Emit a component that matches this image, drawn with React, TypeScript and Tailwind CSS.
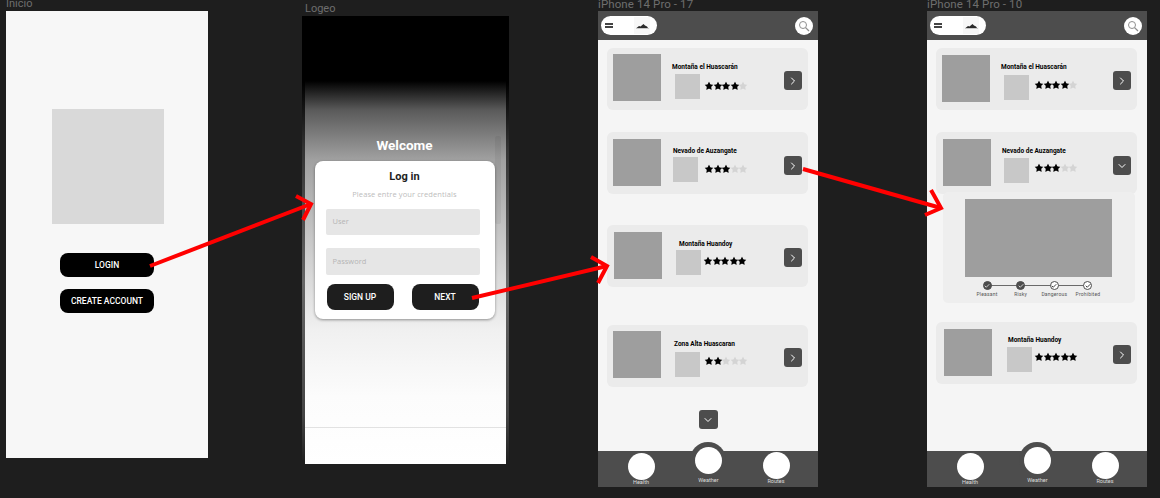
import { Check, ChevronDown, ChevronRight, Star } from "lucide-react";

const ROBOTO = "font-['Roboto','Liberation_Sans',sans-serif]";
const MONT = "font-['Open_Sans','Liberation_Sans',sans-serif]";

type Route = {
  title: string;
  stars: number;
  cardClass: string;
  imageClass: string;
  bodyClass: string;
  thumbClass: string;
  starsClass: string;
  buttonClass: string;
  open?: boolean;
};

const LIST_A: Route[] = [
  {
    title: "Montaña el Huascarán",
    stars: 4,
    cardClass: "mt-[8px]",
    imageClass: "ml-[6px] mt-[6px]",
    bodyClass: "ml-[11px] mt-[15px]",
    thumbClass: "ml-[3px] mt-[3px]",
    starsClass: "ml-[5px] mt-[10px]",
    buttonClass: "mt-[23px]",
  },
  {
    title: "Nevado de Auzangate",
    stars: 3,
    cardClass: "mt-[22px]",
    imageClass: "ml-[6px] mt-[7px]",
    bodyClass: "ml-[12px] mt-[15px]",
    thumbClass: "ml-[0px] mt-[2px]",
    starsClass: "ml-[7px] mt-[9px]",
    buttonClass: "mt-[24px]",
  },
  {
    title: "Montaña Huandoy",
    stars: 5,
    cardClass: "mt-[31px]",
    imageClass: "ml-[7px] mt-[7px]",
    bodyClass: "ml-[17px] mt-[15px]",
    thumbClass: "ml-[-3px] mt-[2px]",
    starsClass: "ml-[3px] mt-[8px]",
    buttonClass: "mt-[23px]",
  },
  {
    title: "Zona Alta Huascaran",
    stars: 2,
    cardClass: "mt-[38px]",
    imageClass: "ml-[6px] mt-[6px]",
    bodyClass: "ml-[13px] mt-[15px]",
    thumbClass: "ml-[1px] mt-[4px]",
    starsClass: "ml-[5px] mt-[8px]",
    buttonClass: "mt-[23px]",
  },
];

const LIST_B: Route[] = [
  {
    title: "Montaña el Huascarán",
    stars: 4,
    cardClass: "mt-[8px]",
    imageClass: "ml-[6px] mt-[7px]",
    bodyClass: "ml-[11px] mt-[15px]",
    thumbClass: "ml-[3px] mt-[4px]",
    starsClass: "ml-[6px] mt-[9px]",
    buttonClass: "mt-[23px]",
  },
  {
    title: "Nevado de Auzangate",
    stars: 3,
    cardClass: "mt-[22px]",
    imageClass: "ml-[7px] mt-[7px]",
    bodyClass: "ml-[11px] mt-[15px]",
    thumbClass: "ml-[2px] mt-[3px]",
    starsClass: "ml-[6px] mt-[8px]",
    buttonClass: "mt-[24px]",
    open: true,
  },
];

const LIST_B_LAST: Route = {
  title: "Montaña Huandoy",
  stars: 5,
  cardClass: "mt-[19px]",
  imageClass: "ml-[8px] mt-[7px]",
  bodyClass: "ml-[16px] mt-[14px]",
  thumbClass: "ml-[-1px] mt-[3px]",
  starsClass: "ml-[3px] mt-[8px]",
  buttonClass: "mt-[23px]",
};

const STEPS = [
  { label: "Pleasant", done: true },
  { label: "Risky", done: true },
  { label: "Dangerous", done: false },
  { label: "Prohibited", done: false },
];

function StarRow({ filled, className }: { filled: number; className: string }) {
  return (
    <div className={`flex pl-[1px] ${className}`}>
      {[0, 1, 2, 3, 4].map((i) => (
        <Star
          key={i}
          size={10}
          strokeWidth={0}
          className={`-ml-[1.6px] ${i < filled ? "fill-black" : "fill-[#d4d4d4]"}`}
        />
      ))}
    </div>
  );
}

function RouteCard({ route }: { route: Route }) {
  return (
    <div className={`ml-[9px] mr-[10px] flex h-[62px] items-start rounded-[6px] bg-[#ebebeb] ${route.cardClass}`}>
      <div className={`h-[47px] w-[48px] shrink-0 bg-[#9e9e9e] ${route.imageClass}`} />
      <div className={`w-[90px] shrink-0 ${route.bodyClass}`}>
        <p className={`${ROBOTO} whitespace-nowrap text-[6.5px] leading-[8px] font-bold text-black`}>{route.title}</p>
        <div className="flex items-start">
          <div className={`h-[25px] w-[25px] shrink-0 bg-[#c8c8c8] ${route.thumbClass}`} />
          <StarRow filled={route.stars} className={route.starsClass} />
        </div>
      </div>
      <div
        className={`ml-auto mr-[6px] flex h-[19px] w-[18px] shrink-0 items-center justify-center rounded-[3px] bg-[#4d4d4d] text-white ${route.buttonClass}`}
      >
        {route.open ? <ChevronDown size={12} strokeWidth={2} /> : <ChevronRight size={12} strokeWidth={2} />}
      </div>
    </div>
  );
}

function MountainLogo() {
  return (
    <svg viewBox="0 0 16 17" className="h-[17px] w-[16px] bg-[#f7f7f7]">
      <path d="M2.5 11 L5 9 L6.5 9.5 L9.5 7 L11 8.5 L13 9.5 L14 11 Z" fill="#2a2a2a" />
      <path d="M2 11.5 H15" stroke="#999" strokeWidth="0.5" />
    </svg>
  );
}

function Header() {
  return (
    <div className="flex h-[29px] shrink-0 items-center justify-between bg-[#4d4d4d] pl-[3px] pr-[5px]">
      <div className="flex h-[19px] w-[56px] items-center rounded-full bg-white pl-[4px]">
        <div className="flex w-[8px] flex-col gap-[1px]">
          <div className="h-[2px] bg-[#444]" />
          <div className="h-[2px] bg-[#444]" />
        </div>
        <div className="ml-[21px]">
          <MountainLogo />
        </div>
      </div>
      <div className="flex h-[18px] w-[18px] items-center justify-center rounded-full bg-white">
        <svg viewBox="0 0 12 12" className="h-[12px] w-[12px]" fill="none" stroke="#8f8f8f" strokeWidth="1">
          <circle cx="5" cy="5" r="3.5" />
          <path d="M7.6 7.6 L11 11" strokeWidth="1.3" />
        </svg>
      </div>
    </div>
  );
}

function BottomBar() {
  return (
    <div className="relative mt-auto flex h-[36px] shrink-0 items-start justify-between bg-[#4d4d4d] pl-[29px] pr-[28px]">
      <div className="absolute left-[92px] top-[-9px] h-[36px] w-[36px] rounded-full bg-[#4d4d4d]" />
      {[
        { label: "Health", tabClass: "mt-[2px]", gapClass: "mt-[-1px]" },
        { label: "Weather", tabClass: "mt-[-4px]", gapClass: "mt-[3px]" },
        { label: "Routes", tabClass: "mt-[1px]", gapClass: "mt-[-1px]" },
      ].map((tab) => (
        <div key={tab.label} className={`relative flex w-[28px] flex-col items-center ${tab.tabClass}`}>
          <div className="h-[27px] w-[27px] shrink-0 rounded-full bg-white" />
          <span className={`${ROBOTO} whitespace-nowrap text-[5.5px] leading-[7px] text-[#dddddd] ${tab.gapClass}`}>
            {tab.label}
          </span>
        </div>
      ))}
    </div>
  );
}

function Stepper() {
  return (
    <div className="relative ml-[31px] mt-[4px] flex w-[127px] justify-between">
      <div className="absolute left-[14px] right-[14px] top-[4px] h-[1px] bg-[#6a6a6a]" />
      {STEPS.map((step) => (
        <div key={step.label} className="relative flex w-[26px] flex-col items-center">
          <div
            className={`flex h-[9px] w-[9px] items-center justify-center rounded-full border border-[#4d4d4d] ${step.done ? "bg-[#4d4d4d] text-white" : "bg-white text-black"}`}
          >
            <Check size={6} strokeWidth={3} />
          </div>
          <span className={`${ROBOTO} mt-[1px] whitespace-nowrap text-[5px] leading-[6px] tracking-[0.2px] text-[#555]`}>
            {step.label}
          </span>
        </div>
      ))}
    </div>
  );
}

function RouteDetail() {
  return (
    <div className="ml-[16px] mr-[12px] mt-[-2px] h-[111px] rounded-[5px] bg-[#eeeeee] pt-[7px]">
      <div className="ml-[22px] h-[78px] w-[147px] bg-[#9e9e9e]" />
      <Stepper />
    </div>
  );
}

function Phone({ label, left, children }: { label: string; left: string; children: React.ReactNode }) {
  return (
    <section className={`absolute top-[-3px] flex w-[220px] flex-col ${left}`}>
      <p className={`${ROBOTO} h-[14px] whitespace-nowrap text-[11.5px] leading-[14px] tracking-[0.1px] text-[#6e6e6e]`}>{label}</p>
      <div className="flex h-[476px] flex-col bg-[#f5f5f5]">
        <Header />
        {children}
        <BottomBar />
      </div>
    </section>
  );
}

function Arrow({ points, head }: { points: string; head: string }) {
  return (
    <g fill="none" stroke="#ff0000" strokeWidth="4">
      <polyline points={points} />
      <polyline points={head} />
    </g>
  );
}

export default function App() {
  return (
    <div className="relative h-[498px] w-[1160px] overflow-hidden bg-[#1e1e1e]">
      {/* Inicio */}
      <section className="absolute left-[6px] top-[-3px] flex w-[202px] flex-col">
        <p className={`${ROBOTO} h-[14px] text-[11px] leading-[14px] text-[#6e6e6e]`}>Inicio</p>
        <div className="flex h-[447px] flex-col items-center bg-[#f7f7f7] pt-[98px]">
          <div className="ml-[2px] h-[115px] w-[112px] bg-[#d9d9d9]" />
          <button className={`${ROBOTO} mt-[29px] h-[24px] w-[94px] rounded-[8px] bg-black text-[8.5px] font-medium text-white`}>
            LOGIN
          </button>
          <button className={`${ROBOTO} mt-[12px] h-[24px] w-[94px] rounded-[8px] bg-black text-[8.5px] font-medium text-white`}>
            CREATE ACCOUNT
          </button>
        </div>
      </section>

      {/* Logeo */}
      <section className="absolute left-[302px] top-[2px] w-[207px]">
        <p className={`${ROBOTO} ml-[3px] h-[14px] text-[11px] leading-[14px] text-[#6e6e6e]`}>Logeo</p>
        <div className="h-[444px] w-[207px] bg-[linear-gradient(to_bottom,#000_15%,#333_30%,#666_60%,#444_90%,#222_100%)]">
          <div className="relative mx-[3px] flex h-[448px] w-[201px] flex-col items-center bg-[linear-gradient(to_bottom,#000_0%,#000_14.5%,#5a5a5a_21%,#a0a0a0_32%,#c8c8c8_50%,#f0f0f0_70%,#fcfcfc_85%,#ffffff_100%)]">
            <div className="absolute left-[190px] top-[120px] h-[88px] w-[6px] rounded-[2px] bg-black/5" />
            <h1 className={`${ROBOTO} mt-[120px] ml-[-2px] h-[18px] text-[13.5px] leading-[18px] font-bold text-white`}>Welcome</h1>
            <div className="ml-[-2px] mt-[7px] flex h-[158px] w-[180px] flex-col rounded-[8px] bg-white px-[11px] shadow-[0_1px_3px_rgba(0,0,0,0.4)]">
              <h2 className={`${ROBOTO} mt-[8px] text-center text-[11px] leading-[15px] font-bold text-[#1e1e1e]`}>Log in</h2>
              <p className={`${MONT} mt-[5px] text-center text-[7.5px] leading-[10px] tracking-[0.1px] text-[#bdbdbd]`}>Please entre your credentials</p>
              <div className={`${MONT} mt-[10px] flex h-[26px] w-[154px] items-center rounded-[2px] bg-[#e6e6e6] pl-[7px] text-[7.5px] text-[#b5b5b5]`}>User</div>
              <div className={`${MONT} mt-[13px] flex h-[27px] w-[154px] items-center rounded-[2px] bg-[#e6e6e6] pl-[7px] text-[7.5px] text-[#b5b5b5]`}>Password</div>
              <div className="mt-[9px] flex w-[154px] justify-between pl-[1px] pr-[1px]">
                <button className={`${ROBOTO} h-[26px] w-[67px] rounded-[8px] bg-[#1e1e1e] text-[8.5px] font-medium text-white`}>SIGN UP</button>
                <button className={`${ROBOTO} h-[26px] w-[67px] rounded-[8px] bg-[#1e1e1e] text-[8.5px] font-medium text-white`}>NEXT</button>
              </div>
            </div>
            <div className="mt-[108px] h-[1px] w-full bg-[#e2e2e2]" />
          </div>
        </div>
      </section>

      {/* iPhone 14 Pro - 17 */}
      <Phone label="iPhone 14 Pro - 17" left="left-[598px]">
        {LIST_A.map((route) => (
          <RouteCard key={route.title} route={route} />
        ))}
        <div className="mx-auto mt-[23px] flex h-[19px] w-[19px] items-center justify-center rounded-[3px] bg-[#4d4d4d] text-white">
          <ChevronDown size={12} strokeWidth={2} />
        </div>
      </Phone>

      {/* iPhone 14 Pro - 10 */}
      <Phone label="iPhone 14 Pro - 10" left="left-[927px]">
        {LIST_B.map((route) => (
          <RouteCard key={route.title} route={route} />
        ))}
        <RouteDetail />
        <RouteCard route={LIST_B_LAST} />
      </Phone>

      {/* flow arrows between frames */}
      <svg className="pointer-events-none absolute inset-0" width="1160" height="498">
        <Arrow points="150,266 311,204" head="296,196 311,204 303,220" />
        <Arrow points="472,298 607,266" head="591,257 607,266 598,283" />
        <Arrow points="803,169 941,208" head="931,190 941,208 925,215" />
      </svg>
    </div>
  );
}
